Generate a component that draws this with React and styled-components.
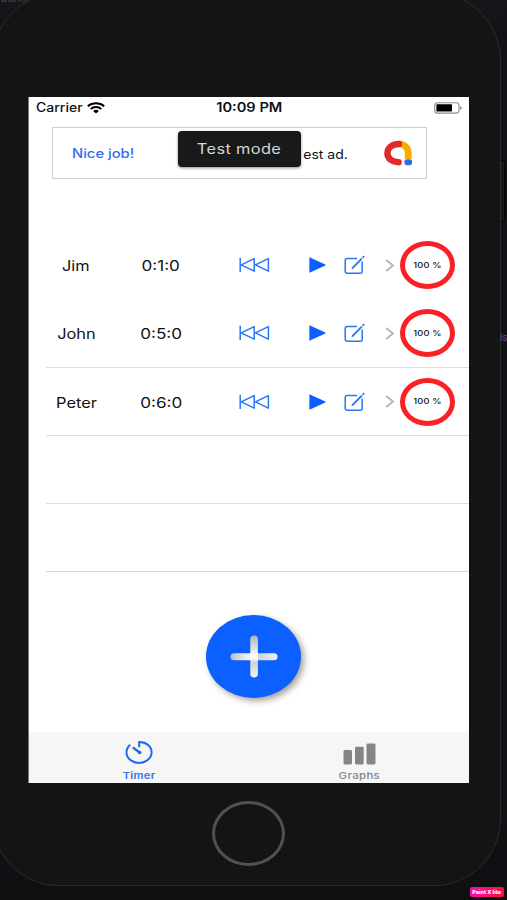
import React from "react";
import styled, { createGlobalStyle } from "styled-components";

const timers = [
  { name: "Jim", time: "0:1:0", percent: 100 },
  { name: "John", time: "0:5:0", percent: 100 },
  { name: "Peter", time: "0:6:0", percent: 100 },
];

const App = () => {
  return (
    <Desktop>
      <GlobalStyle />
      <EditorTop>aunts</EditorTop>
      <SideButton />
      <Phone>
        <Screen>
          <StatusBar>
            <Carrier>
              <Label size={12.5} weight={500} stretch={1.12} origin="left">Carrier</Label>
              <WifiIcon />
            </Carrier>
            <Label size={12.5} weight={600} stretch={1.17}>10:09 PM</Label>
            <Battery />
          </StatusBar>

          <AdBanner>
            <Label size={12.5} weight={500} stretch={1.18} color="#316cf0" origin="left">Nice job!</Label>
            <AdText>
              <Label size={12.5} weight={400} stretch={1.12} origin="right">est ad.</Label>
            </AdText>
            <AdLogo />
            <TestMode>
              <Label size={14} weight={400} stretch={1.17} color="#d5d6d8" spacing={0.3}>Test mode</Label>
            </TestMode>
          </AdBanner>

          <TimerList>
            {timers.map((timer, i) => (
              <TimerRow key={timer.name} line={i > 0 ? "#dedee0" : "transparent"}>
                <Name>
                  <Label size={14} stretch={1.17}>{timer.name}</Label>
                </Name>
                <Time>
                  <Label size={14} stretch={1.22}>{timer.time}</Label>
                </Time>
                <RewindIcon />
                <PlayIcon />
                <EditIcon />
                <ChevronIcon />
                <Ring>
                  <Label size={7.5} weight={500} stretch={1.24} spacing={0.1}>{timer.percent} %</Label>
                </Ring>
              </TimerRow>
            ))}
            <TimerRow line="#dedee0" />
            <TimerRow line="#d6d6d8" />
          </TimerList>

          <AddArea>
            <AddButton aria-label="Add timer">
              <PlusIcon />
            </AddButton>
          </AddArea>

          <TabBar>
            <Tab>
              <TimerIcon />
              <Label size={9.5} weight={600} stretch={1.16} color="#2f74ee" spacing={0.3}>Timer</Label>
            </Tab>
            <Tab>
              <GraphIcon />
              <Label size={9.5} weight={500} stretch={1.2} color="#858585" spacing={0.3}>Graphs</Label>
            </Tab>
          </TabBar>
        </Screen>
        <HomeButton />
      </Phone>
      <EditorSide>is</EditorSide>
      <Watermark>
        <Label size={5.2} weight={800} stretch={1.05} color="#fff">Paint X lite</Label>
      </Watermark>
    </Desktop>
  );
};

export default App;

const WifiIcon = () => (
  <svg width="18" height="12" viewBox="0 0 18 12" fill="none" stroke="#000" strokeWidth="1.9">
    <path d="M0.8 4.2C5.2 0.2 12.8 0.2 17.2 4.2" />
    <path d="M3.7 7C6.7 4.3 11.3 4.3 14.3 7" />
    <path d="M6.1 8.9C7.7 7.4 10.3 7.4 11.9 8.9L9 11.6Z" fill="#000" stroke="none" />
  </svg>
);

const Battery = () => (
  <svg width="29" height="12" viewBox="0 0 29 12">
    <rect x="0.7" y="0.7" width="24.3" height="10.4" rx="2.8" fill="#fff" stroke="#8d8d8d" strokeWidth="1.1" />
    <rect x="2.4" y="2.2" width="15.6" height="7.4" rx="0.6" fill="#000" />
    <path d="M26.2 3.8L28.2 5.9L26.2 8Z" fill="#888" />
  </svg>
);

const AdLogo = () => (
  <svg width="30" height="26" viewBox="0 0 30 26" fill="none">
    <path d="M15.3 3.9C21.5 3.9 25.2 7.8 25.2 13V19" stroke="#f9ab00" strokeWidth="6.8" />
    <path d="M16 4C9.5 4 4.4 7.8 4.4 13.2C4.4 18.8 9.6 22.2 15.6 22.2" stroke="#e12b2b" strokeWidth="6.4" strokeLinecap="round" />
    <rect x="21.4" y="19.2" width="7.7" height="6" rx="2.6" fill="#2f6be4" />
  </svg>
);

const RewindIcon = () => (
  <svg width="31" height="16" viewBox="0 0 31 16" fill="none" stroke="#2876f7" strokeWidth="1.5">
    <path d="M1.2 0.8V15" />
    <path d="M15.2 1.6V14.2L2.2 7.9Z" strokeLinejoin="round" />
    <path d="M29.4 1.6V14.2L16.4 7.9Z" strokeLinejoin="round" />
  </svg>
);

const PlayIcon = () => (
  <svg width="17" height="16" viewBox="0 0 17 16">
    <path d="M0.4 0.6Q0.4 0.2 1 0.4L16.3 7.6Q16.8 8 16.3 8.4L1 15.6Q0.4 15.8 0.4 15.4Z" fill="#0a60ff" />
  </svg>
);

const EditIcon = () => (
  <svg width="21" height="20" viewBox="0 0 21 20" fill="none" stroke="#2876f7" strokeWidth="1.5">
    <path d="M13 3.4H3.2Q1.2 3.4 1.2 5.2V16.6Q1.2 18.3 3.2 18.3H16.2Q18.2 18.3 18.2 16.6V6.6" />
    <path d="M8.4 13.2L17.8 3.6" strokeWidth="1.9" />
    <path d="M18.4 2.9L20.2 1.2" strokeWidth="1.6" />
    <path d="M7.4 14.3L8 12.4L9.4 13.5Z" fill="#2876f7" stroke="none" />
  </svg>
);

const ChevronIcon = () => (
  <svg width="10" height="13" viewBox="0 0 10 13" fill="none" stroke="#b4b4b6" strokeWidth="1.8">
    <path d="M1.2 1L8 6.5L1.2 12" />
  </svg>
);

const PlusIcon = () => (
  <svg width="48" height="43" viewBox="0 0 48 43">
    <defs>
      <linearGradient id="across" x1="0" x2="1" y1="0" y2="0">
        <stop offset="0" stopColor="#bcbcbc" />
        <stop offset="0.25" stopColor="#e2e2e2" />
        <stop offset="0.5" stopColor="#fff" />
        <stop offset="0.6" stopColor="#d2d2d2" />
        <stop offset="1" stopColor="#f2f2f2" />
      </linearGradient>
      <linearGradient id="down" x1="0" x2="0" y1="0" y2="1">
        <stop offset="0" stopColor="#b5b5b5" />
        <stop offset="0.3" stopColor="#e0e0e0" />
        <stop offset="0.5" stopColor="#fff" />
        <stop offset="0.65" stopColor="#d4d4d4" />
        <stop offset="1" stopColor="#f3f3f3" />
      </linearGradient>
    </defs>
    <rect x="0.5" y="18.2" width="47" height="7" rx="3.5" fill="url(#across)" />
    <rect x="20.3" y="0.5" width="7.6" height="42" rx="3.8" fill="url(#down)" />
    <rect x="21" y="18.9" width="7" height="5.6" fill="#fff" opacity="0.6" />
  </svg>
);

const TimerIcon = () => (
  <svg width="28" height="25" viewBox="0 0 28 25" fill="none" stroke="#1f6bf0" strokeWidth="2">
    <path d="M14.2 7.2V1.9C21.5 1.9 26.6 6.4 26.6 12.3C26.6 18.3 21 22.9 14 22.9C7 22.9 1.5 18.3 1.5 12.3C1.5 9.2 3 6.6 5.2 4.9" />
    <path d="M8.6 8.1L14.6 12.4" strokeWidth="2.4" strokeLinecap="round" />
    <ellipse cx="14.6" cy="12.5" rx="1.9" ry="1.7" fill="#1f6bf0" stroke="none" />
  </svg>
);

const GraphIcon = () => (
  <svg width="33" height="22" viewBox="0 0 33 22" fill="#858585">
    <rect x="0.5" y="7" width="8.5" height="14.5" rx="1.4" />
    <rect x="12" y="3.8" width="8.7" height="17.7" rx="1.4" />
    <rect x="23.5" y="0.6" width="9" height="20.9" rx="1.4" />
  </svg>
);

const GlobalStyle = createGlobalStyle`
  * {
    box-sizing: border-box;
  }

  body {
    margin: 0;
    background: #101113;
    font-family: Inter, "Liberation Sans", sans-serif;
  }

  svg {
    display: block;
    flex: none;
  }
`;

const Desktop = styled.div`
  position: relative;
  width: 507px;
  height: 900px;
  overflow: hidden;
  background: linear-gradient(#15171a, #111215 40px, #121216 780px, #0e0f11);
`;

// wide lettering, the glyphs are stretched sideways
const Label = styled.span.withConfig({
  shouldForwardProp: (prop) => !["size", "weight", "stretch", "origin", "color", "spacing"].includes(prop),
})`
  display: inline-block;
  font-size: ${(props) => props.size}px;
  font-weight: ${(props) => props.weight || 400};
  letter-spacing: ${(props) => props.spacing || 0}px;
  line-height: 1.2;
  color: ${(props) => props.color || "#111"};
  white-space: nowrap;
  transform: scaleX(${(props) => props.stretch || 1});
  transform-origin: ${(props) => props.origin || "center"};
`;

const EditorTop = styled.span`
  position: absolute;
  top: -9px;
  left: 1px;
  font-size: 11px;
  color: #45474a;
`;

const EditorSide = styled.span`
  position: absolute;
  top: 332px;
  left: 500px;
  font-size: 9.5px;
  line-height: 12px;
  color: #65568a;
`;

const SideButton = styled.div`
  position: absolute;
  top: 160px;
  left: 498px;
  width: 7px;
  height: 62px;
  border: 1px solid #050505;
  border-radius: 2px;
  background: #191919;
`;

const Phone = styled.div`
  position: relative;
  width: 509px;
  height: 893px;
  margin: -7px 0 0 -8px;
  padding: 103px 0 0 35px;
  border: 1px solid #2a2b2d;
  border-radius: 66px / 68px;
  background: #141414;
`;

const Screen = styled.div`
  display: flex;
  flex-direction: column;
  width: 441px;
  height: 686px;
  border-left: 1px solid #777;
  background: #fff;
`;

const StatusBar = styled.div`
  display: grid;
  grid-template-columns: 1fr auto 1fr;
  align-items: center;
  height: 21px;
  padding: 0 6px 0 7px;

  > svg {
    justify-self: end;
  }
`;

const Carrier = styled.div`
  display: flex;
  align-items: center;
  gap: 9px;
`;

const AdBanner = styled.div`
  position: relative;
  display: flex;
  align-items: center;
  width: 375px;
  height: 52px;
  margin: 9px 0 0 23px;
  padding: 0 13px 0 19px;
  border: 1px solid #c9d0d3;
`;

const AdText = styled.div`
  flex: 1;
  padding-right: 35px;
  text-align: right;
`;

// toast over the ad
const TestMode = styled.div`
  position: absolute;
  top: 3px;
  left: 125px;
  display: flex;
  align-items: center;
  justify-content: center;
  width: 123px;
  height: 36px;
  border-radius: 4px;
  background: #17191b;
  box-shadow: 0 1px 3px rgba(0, 0, 0, 0.45);
`;

const TimerList = styled.div`
  margin: 52px 0 0 17px;
`;

const TimerRow = styled.div.withConfig({
  shouldForwardProp: (prop) => prop !== "line",
})`
  display: grid;
  grid-template-columns: 60px 133px 70px 35px 41px 15px 55px;
  align-items: center;
  height: 68.3px;
  padding-top: 1px;
  border-bottom: 1px solid ${(props) => props.line};
`;

const Name = styled.div`
  text-align: center;
`;

const Time = styled.div`
  width: 110px;
  text-align: center;
`;

const Ring = styled.div`
  display: flex;
  align-items: center;
  justify-content: center;
  width: 55px;
  height: 48px;
  border: 5px solid #fb2024;
  border-radius: 50%;
`;

const AddArea = styled.div`
  display: flex;
  flex: 1;
  justify-content: center;
  padding: 43px 0 0 9px;
`;

const AddButton = styled.button`
  display: flex;
  align-items: center;
  justify-content: center;
  width: 95px;
  height: 83px;
  padding: 0;
  border: none;
  border-radius: 50%;
  background: #0b60ff;
  box-shadow: 3px 3px 6px rgba(60, 45, 30, 0.45);
  cursor: pointer;
`;

const TabBar = styled.div`
  display: grid;
  grid-template-columns: 1fr 1fr;
  height: 51px;
  background: #f6f6f6;
`;

const Tab = styled.div`
  display: flex;
  flex-direction: column;
  align-items: center;
  justify-content: flex-end;
  gap: 5px;
  padding-bottom: 2px;
`;

const HomeButton = styled.div`
  width: 73px;
  height: 65px;
  margin: 18px 0 0 184px;
  border: 3px solid #515151;
  border-radius: 50%;
`;

const Watermark = styled.div`
  position: absolute;
  right: 3px;
  bottom: 3px;
  display: flex;
  align-items: center;
  justify-content: center;
  width: 34px;
  height: 10px;
  border-radius: 2px;
  background: linear-gradient(90deg, #fb0db0, #fc1030);
`;
